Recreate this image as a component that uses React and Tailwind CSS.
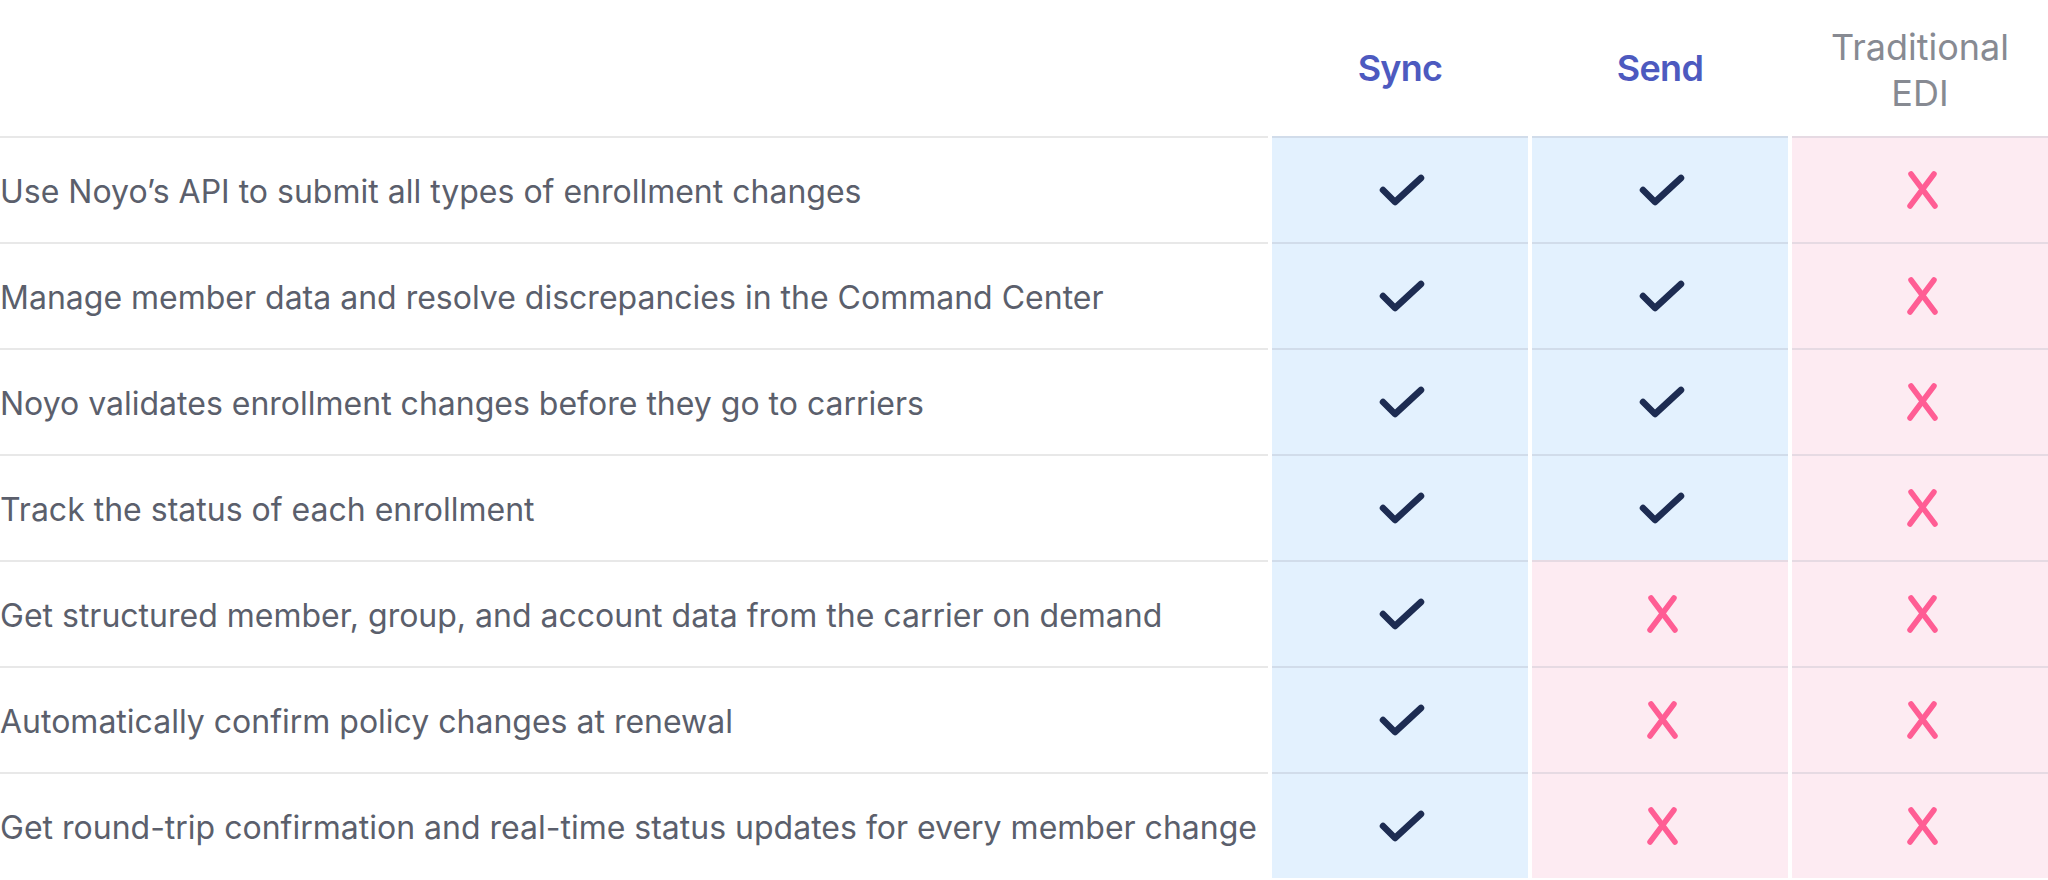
import React from "react";

const rows = [
  ["Use Noyo\u2019s API to submit all types of enrollment changes", true, true, false],
  ["Manage member data and resolve discrepancies in the Command Center", true, true, false],
  ["Noyo validates enrollment changes before they go to carriers", true, true, false],
  ["Track the status of each enrollment", true, true, false],
  ["Get structured member, group, and account data from the carrier on demand", true, false, false],
  ["Automatically confirm policy changes at renewal", true, false, false],
  ["Get round-trip confirmation and real-time status updates for every member change", true, false, false],
];

function Check() {
  return (
    <svg width="48" height="34" viewBox="0 0 48 34" fill="none" className="ml-[4px]">
      <polyline points="5,17 17,29 43,5" stroke="#1d2c52" strokeWidth="6.5" strokeLinecap="round" strokeLinejoin="round" />
    </svg>
  );
}

function Cross() {
  return (
    <svg width="40" height="40" viewBox="0 0 40 40" fill="none" className="ml-[6px]">
      <line x1="8" y1="4" x2="32" y2="36" stroke="#ff5d94" strokeWidth="5.5" strokeLinecap="round" />
      <line x1="31" y1="4" x2="7" y2="36" stroke="#ff5d94" strokeWidth="5.5" strokeLinecap="round" />
    </svg>
  );
}

function Cell({ ok }) {
  return (
    <div
      className={
        "h-[106px] border-t-2 flex items-center justify-center " +
        (ok ? "bg-[#e3f1fe] border-[#d1dcea]" : "bg-[#fdebf2] border-[#e6dae3]")
      }
    >
      {ok ? <Check /> : <Cross />}
    </div>
  );
}

export default function App() {
  return (
    <div className="w-[2048px] h-[880px] bg-white overflow-hidden" style={{ fontFamily: "Inter, 'Liberation Sans', sans-serif" }}>
      <div className="grid grid-cols-[1268px_256px_256px_256px] gap-x-[4px]">
        <div className="h-[136px]" />
        <div className="h-[136px] flex items-center justify-center text-[36px] font-semibold text-[#4d5abf] tracking-[-0.02em]">Sync</div>
        <div className="h-[136px] flex items-center justify-center text-[36px] font-semibold text-[#4d5abf] tracking-[-0.02em]">Send</div>
        <div className="h-[136px] flex items-center justify-center text-center text-[36px] leading-[46px] text-[#878a92] pt-[4px]">
          Traditional
          <br />
          EDI
        </div>
        {rows.map(([label, a, b, c], i) => (
          <React.Fragment key={i}>
            <div className="h-[106px] border-t-2 border-[#e8e8e8] flex items-center pt-[4px] text-[32px] text-[#5b5f6c] whitespace-nowrap">
              {label}
            </div>
            <Cell ok={a} />
            <Cell ok={b} />
            <Cell ok={c} />
          </React.Fragment>
        ))}
      </div>
    </div>
  );
}
